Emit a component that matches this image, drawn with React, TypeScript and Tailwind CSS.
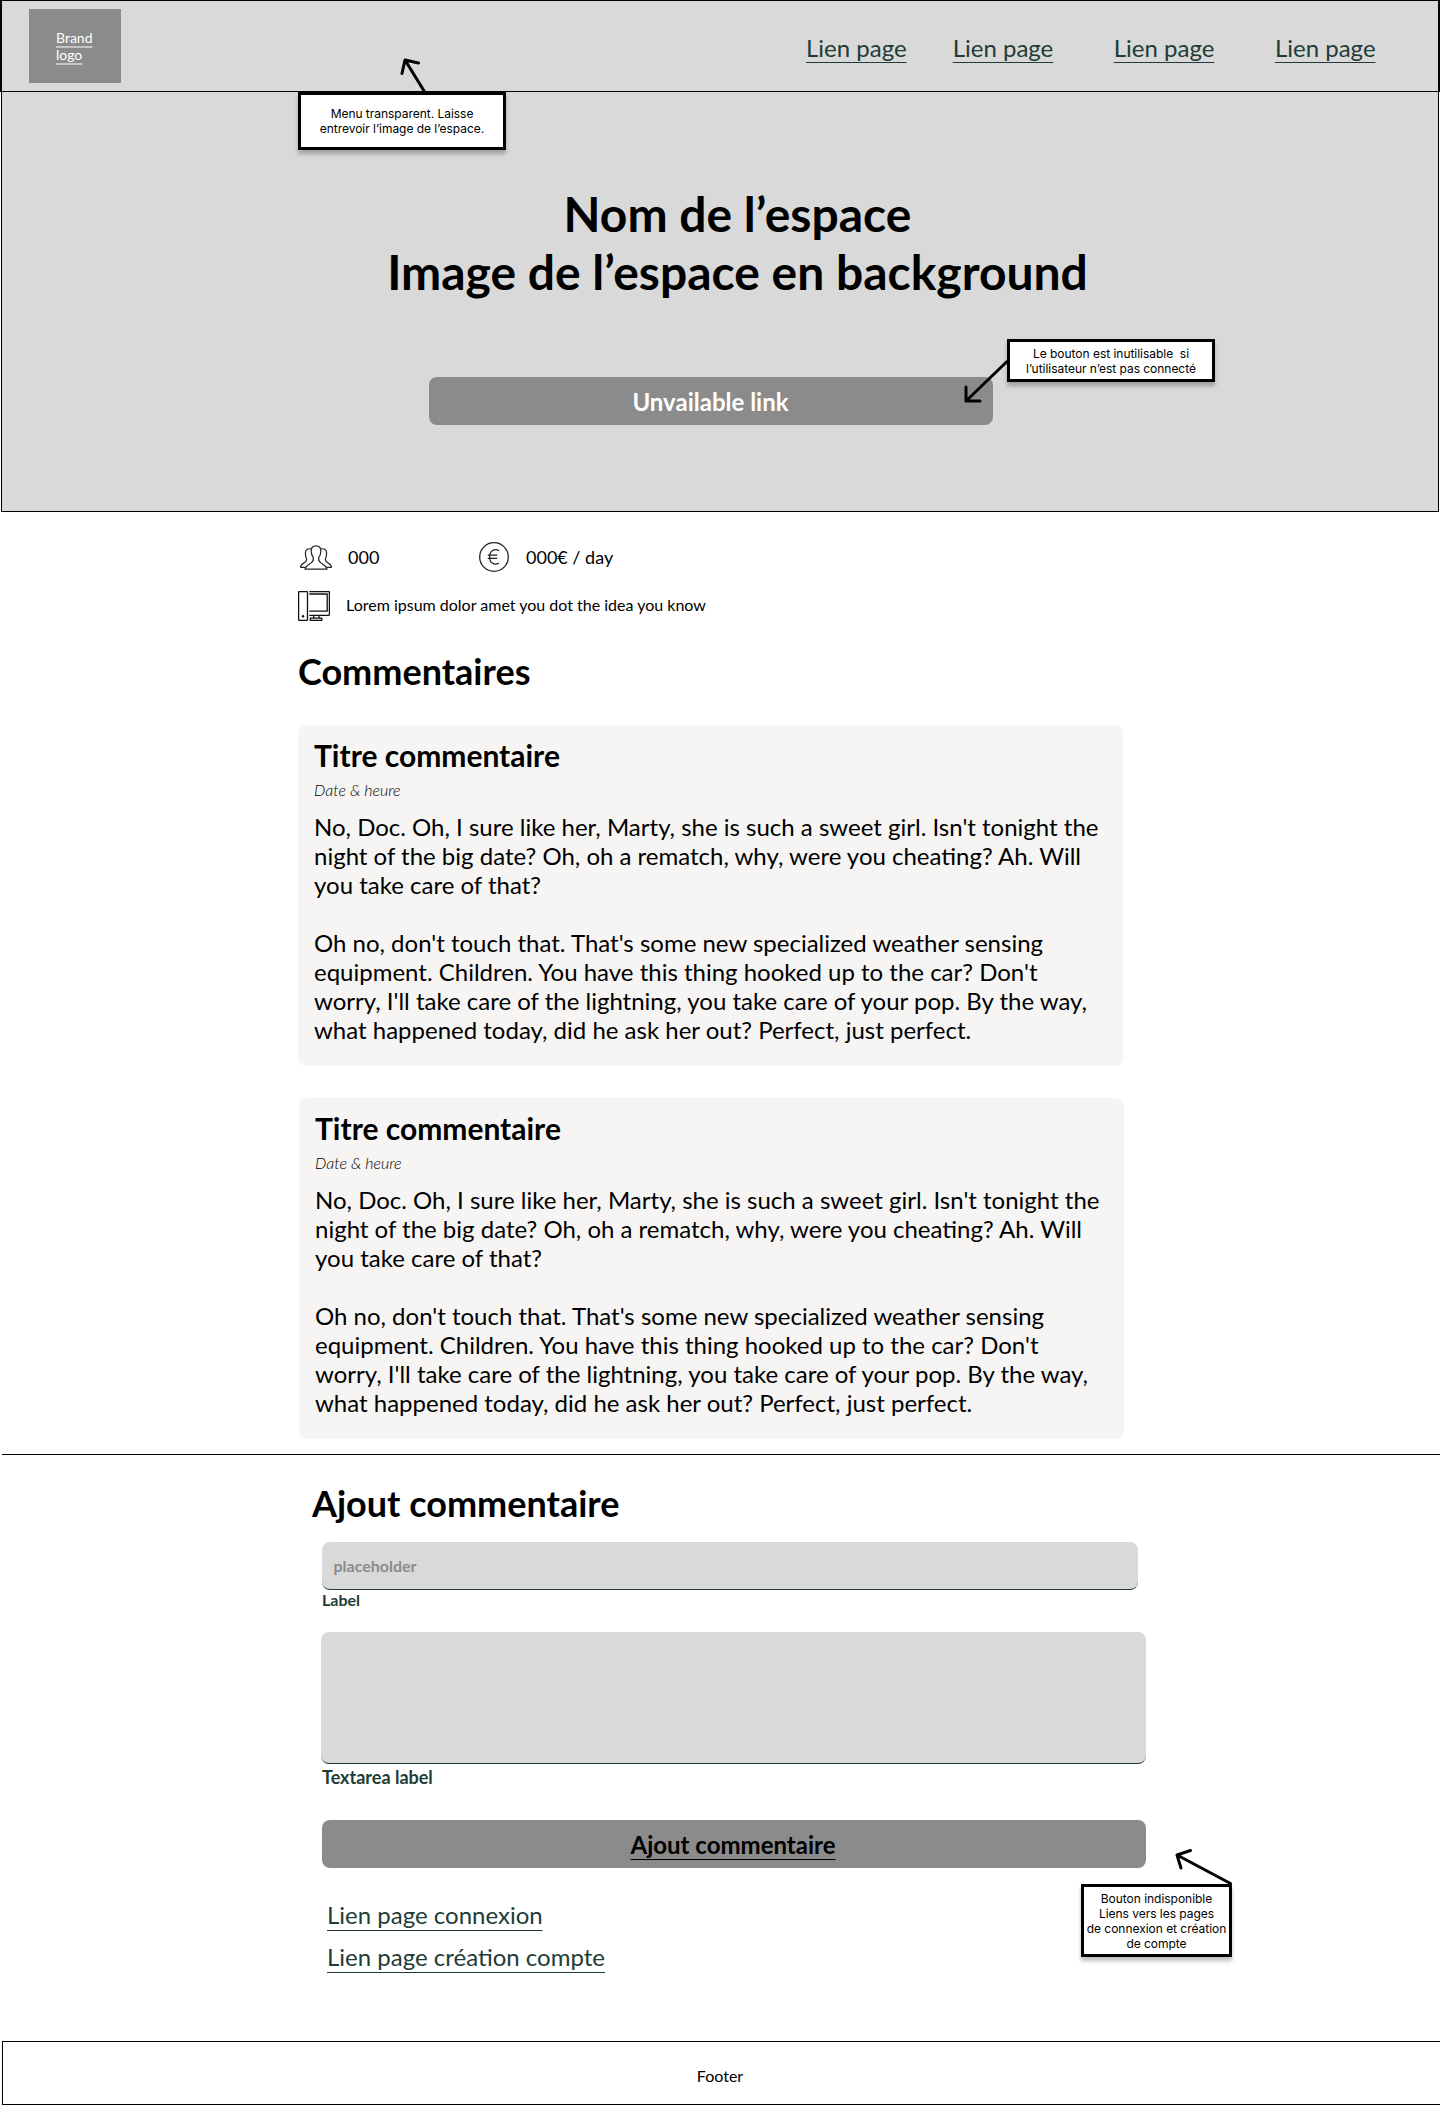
import type { ReactNode } from 'react';

const BODY_1 =
  "No, Doc. Oh, I sure like her, Marty, she is such a sweet girl. Isn't tonight the night of the big date? Oh, oh a rematch, why, were you cheating? Ah. Will you take care of that?";
const BODY_2 =
  "Oh no, don't touch that. That's some new specialized weather sensing equipment. Children. You have this thing hooked up to the car? Don't worry, I'll take care of the lightning, you take care of your pop. By the way, what happened today, did he ask her out? Perfect, just perfect.";

function Note({ className, children }: { className: string; children: ReactNode }) {
  return (
    <div
      className={`absolute z-10 flex items-center justify-center whitespace-pre border-[3px] border-black bg-white text-center font-[Inter,sans-serif] text-[12px] leading-[15px] tracking-[-0.03px] shadow-[0_4px_4px_rgba(0,0,0,0.25)] ${className}`}
    >
      {children}
    </div>
  );
}

function Arrow({ className, d, w, h }: { className: string; d: string; w: number; h: number }) {
  return (
    <svg
      className={`absolute z-20 ${className}`}
      width={w}
      height={h}
      viewBox={`0 0 ${w} ${h}`}
      fill="none"
      stroke="#000"
      strokeWidth="3"
      strokeLinecap="round"
      strokeLinejoin="round"
    >
      <path d={d} />
    </svg>
  );
}

function TextLink({ className = '', children }: { className?: string; children: ReactNode }) {
  return (
    <a
      className={`whitespace-nowrap text-[24px] leading-[29px] text-[#213c36] underline decoration-[1.3px] [text-decoration-skip-ink:none] ${className}`}
    >
      {children}
    </a>
  );
}

function PeopleIcon() {
  return (
    <svg width="32" height="25" viewBox="0 0 32 25" fill="none" stroke="#222" strokeWidth="1.2" strokeLinejoin="round">
      <path d="M16 .8C12.6.8 11 2.8 11.2 6.4c.1 2.8 1 4.8 2.100 6.200.3 2.200 0 3.600-1.800 5C9.200 19.400 5.400 20.600 5 24.200h22c-.4-3.600-4.200-4.800-6.500-6.600-1.800-1.400-2.100-2.800-1.800-5 1.100-1.400 2-3.400 2.100-6.200C21 2.800 19.400.8 16 .8Z" />
      <path d="M11.600 4C8.200 3.200 5.400 4.400 5.400 8c0 2.400.2 3.800 1 5.400.5 1.900.3 2.800-1 3.700C3.300 18.500.8 19.300.6 22.300h4.900" />
      <path d="M20.400 4c3.400-.8 6.200.4 6.200 4 0 2.400-.2 3.800-1 5.400-.5 1.900-.3 2.800 1 3.700 2.100 1.400 4.600 2.200 4.800 5.200h-4.900" />
    </svg>
  );
}

function EuroIcon() {
  return (
    <svg width="30" height="30" viewBox="0 0 30 30" fill="none" stroke="#222" strokeWidth="1.300">
      <circle cx="15" cy="15" r="14.300" />
      <path d="M20 8.600c-4.600-2.400-9.400 0-9.400 6.300s4.800 8.700 9.400 6.300M8.700 13.200h9.500M8.700 16.400h9.500" />
    </svg>
  );
}

function ComputerIcon() {
  return (
    <svg width="32" height="30" viewBox="0 0 32 30" fill="none" stroke="#111" strokeWidth="1.300" strokeLinejoin="round">
      <rect x=".6" y=".6" width="8.900" height="28.800" rx=".8" />
      <circle cx="5" cy="25.300" r="1.200" fill="#111" stroke="none" />
      <path d="M11.300.6h19.200q.9 0 .9.900v22q0 .9-.9.900H11.300" />
      <path d="M11.300 3h17.900v17.200H11.300" />
      <path d="M15.800 24.600v2.600M21 24.600v2.600M12.300 27.200h11.500v2.200H12.300z" />
    </svg>
  );
}

function Comment({ className }: { className: string }) {
  return (
    <article className={`h-[341px] w-[825px] rounded-lg bg-[#f6f5f4] px-4 pt-3 ${className}`}>
      <h3 className="text-[30px] font-bold leading-[36px]">Titre commentaire</h3>
      <p className="mt-[7px] text-[16px] font-light italic leading-[19px]">Date &amp; heure</p>
      <div className="mt-[13px] flex flex-col gap-[29px] text-[24px] leading-[29px]">
        <p>{BODY_1}</p>
        <p>{BODY_2}</p>
      </div>
    </article>
  );
}

export default function App() {
  return (
    <div className="relative h-[2105px] w-[1440px] overflow-hidden bg-white font-[Lato,sans-serif] text-black">
      <header className="flex h-[92px] border-x-2 border-y border-black bg-[#d9d9d9]">
        <div className="ml-[27px] mt-2 h-[74px] w-[92px] bg-[#8b8b8b] pl-[27px] pt-[20px] text-[14px] leading-[17px] text-white underline decoration-white/50 decoration-[1.5px] underline-offset-[3px] [text-decoration-skip-ink:none]">
          Brand
          <br />
          logo
        </div>
        <nav className="ml-[685px] mt-8 flex">
          <TextLink className="underline-offset-[5px]">Lien page</TextLink>
          <TextLink className="ml-[46px] underline-offset-[5px]">Lien page</TextLink>
          <TextLink className="ml-[60.5px] underline-offset-[5px]">Lien page</TextLink>
          <TextLink className="ml-[60.5px] underline-offset-[5px]">Lien page</TextLink>
        </nav>
      </header>

      <section className="ml-px h-[420px] w-[1438px] border-x border-b border-black bg-[#d9d9d9] pt-[93px]">
        <h1 className="ml-[35px] text-center text-[48px] font-bold leading-[58px]">
          Nom de l’espace
          <br />
          Image de l’espace en background
        </h1>
        <button className="ml-[427px] mt-[76px] block h-12 w-[564px] rounded-lg bg-[#8b8b8b] pr-px text-[24px] font-bold leading-[29px] text-white">
          Unvailable link
        </button>
      </section>

      <main className="pl-[298px]">
        <div className="mt-[30px] flex h-[30px] items-center text-[18px]">
          <div className="ml-[2px]">
            <PeopleIcon />
          </div>
          <span className="ml-4 w-[131px]">000</span>
          <EuroIcon />
          <span className="ml-[17px]">000€ / day</span>
        </div>
        <div className="mt-[19px] flex h-[30px] items-center text-[16px]">
          <ComputerIcon />
          <span className="-mt-[2px] ml-4">Lorem ipsum dolor amet you dot the idea you know</span>
        </div>
        <h2 className="mt-[29px] text-[36px] font-bold leading-[43px]">Commentaires</h2>
        <Comment className="mt-8" />
        <Comment className="ml-px mt-8" />
      </main>

      <div className="ml-[2px] mt-[15px] h-px bg-black" />

      <section className="pl-[312px] pt-[27px]">
        <h2 className="text-[36px] font-bold leading-[43px]">Ajout commentaire</h2>
        <div className="ml-[10px] mt-[17px] flex h-12 w-[816px] items-center rounded-lg border-b border-[#213c36] bg-[#d9d9d9] pl-[11.5px] text-[16px] font-bold text-[#8b8b8b]">
          placeholder
        </div>
        <p className="ml-[10px] text-[16px] font-bold leading-[19px] text-[#213c36]">Label</p>
        <div className="ml-[9px] mt-[23px] h-[132px] w-[825px] rounded-lg border-b border-[#213c36] bg-[#d9d9d9]" />
        <p className="ml-[10px] mt-[2px] text-[18px] font-bold leading-[22px] text-[#213c36]">Textarea label</p>
        <div className="ml-[10px] mt-8 flex h-12 w-[824px] justify-center rounded-lg bg-[#8b8b8b] pt-[10px] text-[24px] font-bold leading-[29px]">
          <span className="mr-[2px] underline decoration-[1.3px] underline-offset-[5px] [text-decoration-skip-ink:none]">
            Ajout commentaire
          </span>
        </div>
        <div className="ml-[15px] mt-8 flex flex-col items-start gap-[13px]">
          <TextLink className="underline-offset-[6px]">Lien page connexion</TextLink>
          <TextLink className="underline-offset-[6px]">Lien page création compte</TextLink>
        </div>
      </section>

      <footer className="ml-[2px] mt-[70px] flex h-[64px] items-center justify-center border-y border-l border-black pr-[3px] pt-[4px] text-[16px] leading-[19px]">
        Footer
      </footer>

      <Note className="left-[298px] top-[92px] h-[58px] w-[208px]">{'Menu transparent. Laisse\nentrevoir l’image de l’espace.'}</Note>
      <Arrow className="left-[400px] top-[56px]" w={30} h={40} d="M25 36.500 5 4M2 17.500 5 4l13.500 3" />

      <Note className="left-[1007px] top-[339px] h-[43px] w-[208px]">{'Le bouton est inutilisable  si\nl’utilisateur n’est pas connecté'}</Note>
      <Arrow className="left-[960px] top-[355px]" w={50} h={52} d="M47 6.500 6 46M6 32v14h14" />

      <Note className="left-[1081px] top-[1884px] h-[73px] w-[151px]">
        {'Bouton indisponible\nLiens vers les pages\nde connexion et création\nde compte'}
      </Note>
      <Arrow className="left-[1172px] top-[1845px]" w={64} h={44} d="M58.500 38.500 5 10M18.500 5.500 5 10l4 13" />
    </div>
  );
}
